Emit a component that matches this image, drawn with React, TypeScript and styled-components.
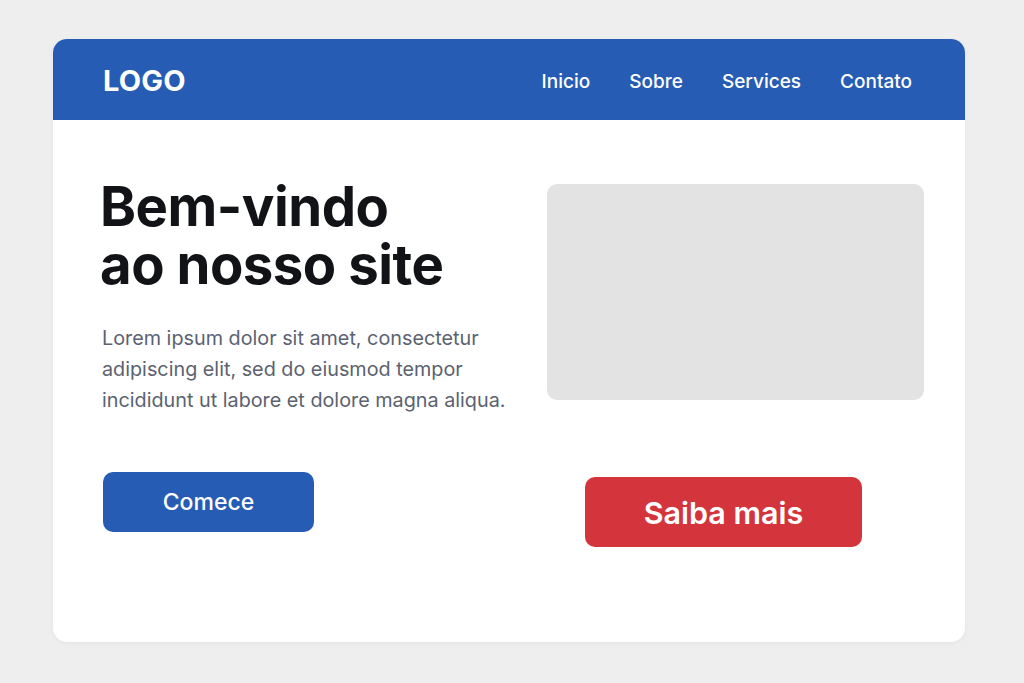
import React from "react";
import styled, { createGlobalStyle } from "styled-components";

const Global = createGlobalStyle`
  html, body { margin: 0; padding: 0; }
  body {
    background: #eeeeee;
    font-family: Inter, "Noto Sans", "Liberation Sans", sans-serif;
    -webkit-font-smoothing: antialiased;
  }
`;

const Page = styled.div`
  width: 1024px;
  height: 683px;
  box-sizing: border-box;
  padding: 39px 0 0 53px;
`;

const Card = styled.div`
  width: 912px;
  height: 603px;
  background: #ffffff;
  border-radius: 14px;
  overflow: hidden;
  box-shadow: 0 1px 4px rgba(0, 0, 0, 0.05);
  display: flex;
  flex-direction: column;
`;

const Header = styled.header`
  height: 81px;
  box-sizing: border-box;
  background: #265cb3;
  display: flex;
  align-items: center;
  justify-content: space-between;
  padding: 1px 53px 0 50px;
`;

const Logo = styled.div`
  color: #ffffff;
  font-size: 29px;
  font-weight: 700;
  letter-spacing: 0.2px;
`;

const Nav = styled.nav`
  display: flex;
  gap: 39px;
  padding-top: 2px;
`;

const NavLink = styled.a`
  color: #ffffff;
  font-size: 19px;
  font-weight: 500;
  text-decoration: none;
`;

const Main = styled.main`
  display: grid;
  grid-template-columns: 1fr 377px;
  column-gap: 40px;
  padding: 57px 41px 0 47px;
`;

const Hero = styled.div`
  display: flex;
  flex-direction: column;
`;

const Title = styled.h1`
  margin: 0;
  font-size: 54.5px;
  font-weight: 700;
  color: #111317;
  letter-spacing: -0.5px;
`;

const TitleLine = styled.span`
  display: block;
  height: 58px;
  line-height: 58px;
  overflow: visible;
`;

const Lead = styled.p`
  margin: 30px 0 0 2px;
  font-size: 19.8px;
  line-height: 31px;
  color: #5b6270;
  font-weight: 400;
`;

const ImageBox = styled.div`
  margin-top: 7px;
  height: 216px;
  background: #e3e3e3;
  border-radius: 10px;
`;

const Actions = styled.div<{ $offsetX: number; $offsetY: number }>`
  display: flex;
  padding-left: ${(p) => p.$offsetX}px;
  padding-top: ${(p) => p.$offsetY}px;
`;

const Button = styled.button<{ $bg: string; $w: number; $h: number; $fs: number; $fw: number }>`
  width: ${(p) => p.$w}px;
  height: ${(p) => p.$h}px;
  background: ${(p) => p.$bg};
  color: #ffffff;
  border: none;
  border-radius: 10px;
  font-family: inherit;
  font-size: ${(p) => p.$fs}px;
  font-weight: ${(p) => p.$fw};
  cursor: pointer;
`;

export default function App() {
  return (
    <>
      <Global />
      <Page>
        <Card>
          <Header>
            <Logo>LOGO</Logo>
            <Nav>
              <NavLink>Inicio</NavLink>
              <NavLink>Sobre</NavLink>
              <NavLink>Services</NavLink>
              <NavLink>Contato</NavLink>
            </Nav>
          </Header>
          <Main>
            <Hero>
              <Title>
                <TitleLine>Bem-vindo</TitleLine>
                <TitleLine>ao nosso site</TitleLine>
              </Title>
              <Lead>
                Lorem ipsum dolor sit amet, consectetur
                <br />
                adipiscing elit, sed do eiusmod tempor
                <br />
                incididunt ut labore et dolore magna aliqua.
              </Lead>
            </Hero>
            <ImageBox />
            <Actions $offsetX={3} $offsetY={56}>
              <Button $bg="#265cb3" $w={211} $h={60} $fs={23} $fw={500}>
                Comece
              </Button>
            </Actions>
            <Actions $offsetX={38} $offsetY={61}>
              <Button $bg="#d4343b" $w={277} $h={70} $fs={30.5} $fw={600}>
                Saiba mais
              </Button>
            </Actions>
          </Main>
        </Card>
      </Page>
    </>
  );
}
